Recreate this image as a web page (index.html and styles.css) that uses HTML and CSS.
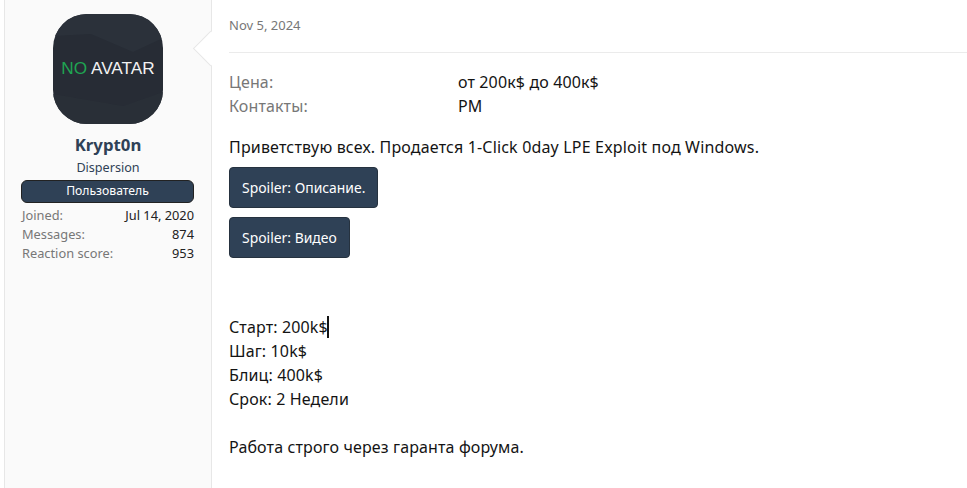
FILE: index.html
```html
<!DOCTYPE html>
<html lang="en">
<head>
    <meta charset="UTF-8">
    <title>Post</title>
    <link rel="stylesheet" href="styles.css">
</head>
<body>
    <div class="post">
        <aside class="user">
            <div class="avatar">
                <svg class="avatar-bg" viewBox="0 0 110 110">
                    <path d="M0 22 L38 20 L80 38 L110 24 L110 0 L0 0 Z" fill="#2b313a"/>
                    <path d="M0 80 L70 92 L110 78 L110 110 L0 110 Z" fill="#292f37"/>
                </svg>
                <span class="avatar-text"><span class="no">NO</span> AVATAR</span>
            </div>
            <div class="username">Krypt0n</div>
            <div class="user-title">Dispersion</div>
            <div class="banner">Пользователь</div>
            <dl class="stat"><dt>Joined:</dt><dd>Jul 14, 2020</dd></dl>
            <dl class="stat"><dt>Messages:</dt><dd>874</dd></dl>
            <dl class="stat"><dt>Reaction score:</dt><dd>953</dd></dl>
        </aside>
        <main class="content">
            <div class="date">Nov 5, 2024</div>
            <div class="fields">
                <div class="field"><span class="field-name">Цена:</span><span>от 200к$ до 400к$</span></div>
                <div class="field"><span class="field-name">Контакты:</span><span>PM</span></div>
            </div>
            <p class="intro">Приветствую всех. Продается 1-Click 0day LPE Exploit под Windows.</p>
            <div class="spoiler"><button class="spoiler-btn">Spoiler: Описание.</button></div>
            <div class="spoiler"><button class="spoiler-btn">Spoiler: Видео</button></div>
            <div class="terms">
                <div>Старт: 200k$<span class="caret"></span></div>
                <div>Шаг: 10k$</div>
                <div>Блиц: 400k$</div>
                <div>Срок: 2 Недели</div>
            </div>
            <p class="note">Работа строго через гаранта форума.</p>
        </main>
    </div>
</body>
</html>
```

FILE: styles.css
```css
* {
    margin: 0;
    padding: 0;
    box-sizing: border-box;
}

html, body {
    height: 100%;
    overflow: hidden;
}

body {
    font-family: "Noto Sans", "Open Sans", sans-serif;
    font-size: 16px;
    line-height: 24px;
    letter-spacing: 0.13px;
    color: #141414;
    background: #fff;
}

.post {
    display: flex;
    height: 488px;
    padding-left: 4px;
    background: #fff;
}

/* Left user column */
.user {
    position: relative;
    width: 208px;
    flex-shrink: 0;
    padding: 14px 17px 0;
    letter-spacing: 0;
    background: #fafafa;
    border-left: 1px solid #e7e7e7;
    border-right: 1px solid #e7e7e7;
}

/* Arrow pointing at the post */
.user::after {
    content: "";
    position: absolute;
    top: 36px;
    right: -12px;
    width: 24px;
    height: 24px;
    background: #fff;
    border-left: 1px solid #e7e7e7;
    border-bottom: 1px solid #e7e7e7;
    transform: rotate(45deg);
}

.avatar {
    position: relative;
    width: 110px;
    height: 110px;
    margin: 0 auto 10px;
    padding-bottom: 2px;
    border-radius: 34px;
    overflow: hidden;
    background: #272c35;
    display: flex;
    align-items: center;
    justify-content: center;
}

.avatar-bg {
    position: absolute;
    inset: 0;
}

.avatar-text {
    position: relative;
    font-family: "Liberation Sans", Arial, sans-serif;
    font-size: 17.2px;
    color: #f2f2f2;
    white-space: nowrap;
}

.no {
    color: #1fa552;
}

.username {
    text-align: center;
    font-size: 16.8px;
    font-weight: 700;
    line-height: 22px;
    color: #2f4156;
}

.user-title {
    text-align: center;
    font-size: 12.6px;
    line-height: 20px;
    margin-top: 2px;
    color: #2f4156;
}

.banner {
    height: 23px;
    margin: 2px 0 3px -1px;
    text-align: center;
    font-size: 12.2px;
    line-height: 20px;
    color: #fff;
    background: #2f4156;
    border: 1px solid #222;
    border-radius: 6px;
}

.stat {
    display: flex;
    justify-content: space-between;
    font-size: 12.8px;
    line-height: 19px;
}

.stat dt {
    color: #777;
}

.stat dd {
    color: #222;
}

/* Post body */
.content {
    flex: 1;
    padding-left: 17px;
}

.date {
    height: 53px;
    padding-top: 13px;
    font-size: 13px;
    letter-spacing: 0;
    color: #777;
    border-bottom: 1px solid #ebebeb;
}

.fields {
    margin-top: 17px;
}

.field {
    display: flex;
}

.field-name {
    width: 229px;
    color: #777;
}

.intro {
    margin-top: 17px;
    margin-bottom: 8px;
    letter-spacing: 0.17px;
}

.spoiler {
    margin-bottom: 9px;
}

.spoiler-btn {
    height: 41px;
    padding: 0 12px;
    font-family: inherit;
    font-size: 13.9px;
    color: #fff;
    background: #2f4156;
    border: 1px solid #26323f;
    border-radius: 4px;
}

.terms {
    margin-top: 57px;
}

.caret {
    display: inline-block;
    width: 2px;
    height: 22px;
    margin-left: -1px;
    vertical-align: -5px;
    background: #141414;
}

.note {
    margin-top: 24px;
}
```
